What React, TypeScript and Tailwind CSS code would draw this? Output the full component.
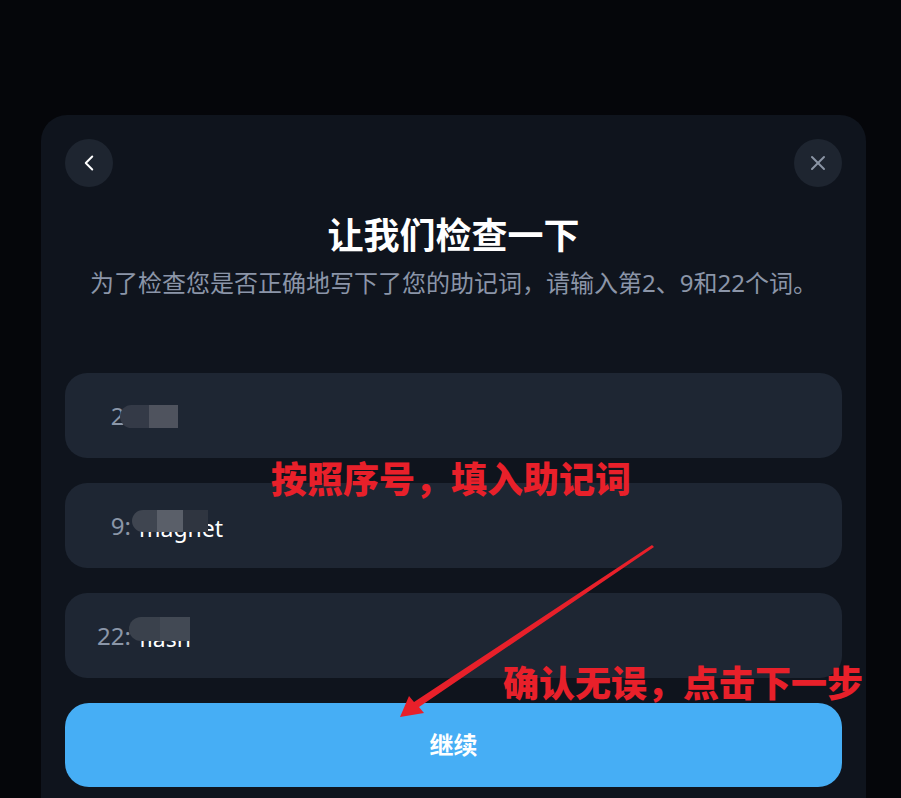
import { ChevronLeft, X } from "lucide-react";

const font = { fontFamily: '"Noto Sans", "Noto Sans CJK SC", sans-serif' };

type Row = {
  label: string;
  word: string;
  mosaic: { left: number; top: number; width: number; height: number; parts: string[] };
};

const rows: Row[] = [
  { label: "2:", word: "", mosaic: { left: 55, top: 32, width: 58, height: 23, parts: ["#343a47", "#4f535e"] } },
  { label: "9:", word: "magnet", mosaic: { left: 67, top: 27, width: 76, height: 22, parts: ["#3f4550", "#5a5f69", "#2f3540"] } },
  { label: "22:", word: "flash", mosaic: { left: 64, top: 24, width: 61, height: 24, parts: ["#3a414c", "#424954"] } },
];

function WordInput({ row }: { row: Row }) {
  const m = row.mosaic;
  return (
    <div className="relative flex h-[85px] items-center rounded-[22px] bg-[#1e2633] px-6">
      <span className="w-[42px] text-right text-[24px] text-[#8b96a8]">{row.label}</span>
      <span className="ml-2 translate-y-[3px] text-[23px] text-white">{row.word}</span>
      {/* mosaic over the word */}
      <div
        className="absolute flex overflow-hidden rounded-l-[12px]"
        style={{ left: m.left, top: m.top, width: m.width, height: m.height }}
      >
        {m.parts.map((c, i) => (
          <div key={i} className="h-full flex-1" style={{ background: c }} />
        ))}
      </div>
    </div>
  );
}

export default function App() {
  return (
    <div className="relative min-h-screen overflow-hidden bg-[#05060a] pt-[115px]" style={font}>
      <div className="ml-[41px] w-[825px] rounded-t-[26px] bg-[#0f141d] px-6 pt-6 pb-6">
        {/* Top buttons */}
        <div className="flex items-center justify-between">
          <button className="flex h-12 w-12 items-center justify-center rounded-full bg-[#1e2530] text-white">
            <ChevronLeft size={26} strokeWidth={1.8} />
          </button>
          <button className="flex h-12 w-12 items-center justify-center rounded-full bg-[#1e2530] text-[#8b95a5]">
            <X size={24} strokeWidth={2} />
          </button>
        </div>

        {/* Heading */}
        <h1 className="mt-[27px] text-center text-[36px] leading-[44px] font-bold text-white">让我们检查一下</h1>
        <p className="mt-[9px] text-center text-[24px] leading-[32px] text-[#8b95a8]">
          为了检查您是否正确地写下了您的助记词，请输入第2、9和22个词。
        </p>

        {/* Inputs */}
        <div className="mt-[74px] flex flex-col gap-[25px]">
          {rows.map((r) => (
            <WordInput key={r.label} row={r} />
          ))}
          <button className="flex h-[84px] items-center justify-center rounded-[24px] bg-[#46aef5] text-[24px] font-bold text-white">
            继续
          </button>
        </div>
      </div>

      {/* Annotations */}
      <div className="absolute top-[462px] left-[271px] text-[36px] leading-[36px] font-black text-[#e8202a]">
        按照序号，填入助记词
      </div>
      <div className="absolute top-[666px] left-[503px] text-[36px] leading-[36px] font-black text-[#e8202a]">
        确认无误，点击下一步
      </div>
      <svg className="pointer-events-none absolute top-0 left-0" width="901" height="798">
        <polygon
          points="652,545 654,547 419,707 424,713 400,717 409,696 414,702"
          fill="#e8202a"
        />
      </svg>
    </div>
  );
}
